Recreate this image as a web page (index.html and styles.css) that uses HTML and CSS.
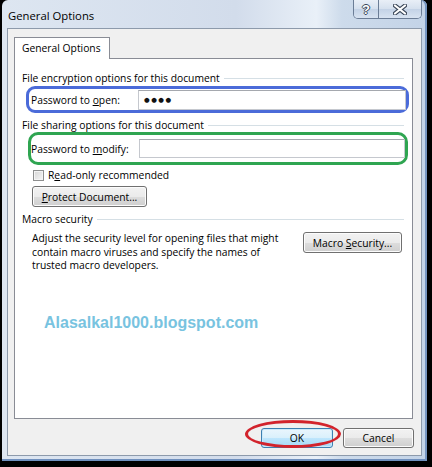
FILE: index.html
```html
<!DOCTYPE html>
<html lang="en">
<head>
    <meta charset="UTF-8">
    <meta name="viewport" content="width=device-width, initial-scale=1.0">
    <title>General Options</title>

    <link rel="stylesheet" href="styles.css">

</head>
<body>

<div class="screen">
    <div class="window">

        <div class="titlebar">
            <span class="title">General Options</span>
            <div class="caption-buttons">
                <span class="cap-btn help">?</span>
                <span class="cap-btn close">
                    <svg width="14" height="11" viewBox="0 0 14 11">
                        <path d="M2 1.5 L12 9.5 M12 1.5 L2 9.5" stroke="#3a4658" stroke-width="4.2" stroke-linecap="round"/>
                        <path d="M2 1.5 L12 9.5 M12 1.5 L2 9.5" stroke="#ffffff" stroke-width="2.2" stroke-linecap="round"/>
                    </svg>
                </span>
            </div>
        </div>

        <div class="client">
            <div class="tabs">
                <span class="tab">General Options</span>
            </div>

            <div class="panel">
                <div class="group-title">File encryption options for this document</div>

                <div class="mark mark-blue">
                    <label class="field-label">Password to <u>o</u>pen:</label>
                    <span class="textbox dots">&#9679;&#9679;&#9679;&#9679;</span>
                </div>

                <div class="group-title second">File sharing options for this document</div>

                <div class="mark mark-green">
                    <label class="field-label">Password to <u>m</u>odify:</label>
                    <span class="textbox"></span>
                </div>

                <label class="check-row">
                    <span class="checkbox"></span>
                    <span>R<u>e</u>ad-only recommended</span>
                </label>

                <button class="btn btn-protect"><u>P</u>rotect Document...</button>

                <div class="group-title third">Macro security</div>

                <div class="macro-row">
                    <p class="macro-text">
                        Adjust the security level for opening files that might<br>
                        contain macro viruses and specify the names of<br>
                        trusted macro developers.
                    </p>
                    <button class="btn btn-macro">Macro <u>S</u>ecurity...</button>
                </div>

                <div class="watermark">Alasalkal1000.blogspot.com</div>
            </div>

            <div class="footer">
                <span class="ok-wrap">
                    <button class="btn btn-default">OK</button>
                    <span class="ring"></span>
                </span>
                <button class="btn btn-cancel">Cancel</button>
            </div>
        </div>

    </div>
</div>

</body>
</html>
```

FILE: styles.css
```css
        * {
            box-sizing: border-box;
        }

        body {
            margin: 0;
            background-color: #000;
            font-family: "Open Sans", "Noto Sans", sans-serif;
            font-size: 10.3px;
            color: #000;
        }

        .screen {
            width: 432px;
            height: 467px;
            padding: 0 5px 6px 2px;
            background-color: #000;
        }

        .window {
            height: 100%;
            display: flex;
            flex-direction: column;
            padding: 0 5px 5px 5px;
            border-radius: 6px 6px 0 0;
            background: linear-gradient(to right, #dde6f1 0%, #d2dceb 55%, #e9f0f8 74%, #cddbeb 80%, #c3d3e7 100%);
            box-shadow: inset -2px 0 0 #7696c2, inset 0 -2px 0 #6f8fbd;
        }

        /* title bar */
        .titlebar {
            height: 28px;
            display: flex;
            justify-content: space-between;
            align-items: flex-start;
        }

        .title {
            margin: 9px 0 0 1px;
            font-size: 11.3px;
            line-height: 14px;
        }

        .caption-buttons {
            display: flex;
            height: 19px;
            border: 1px solid #6b7d96;
            border-top: none;
            border-radius: 0 0 5px 5px;
            overflow: hidden;
        }

        .cap-btn {
            display: flex;
            align-items: center;
            justify-content: center;
            background: linear-gradient(#e9eff7, #d5e0ee 50%, #c3d2e6 51%, #d8e3f1);
        }

        .help {
            width: 25px;
            border-right: 1px solid #6b7d96;
            color: #fff;
            font-family: "Liberation Sans", sans-serif;
            font-weight: bold;
            font-size: 13px;
            text-shadow: 1px 0 #3a4658, -1px 0 #3a4658, 0 1px #3a4658, 0 -1px #3a4658;
        }

        .close {
            width: 42px;
        }

        /* client area */
        .client {
            flex: 1;
            display: flex;
            flex-direction: column;
            padding: 8px 8px 7px 6px;
            background-color: #f0f0f0;
            border: 1px solid #8d9aab;
        }

        .tabs {
            display: flex;
            position: relative;
            z-index: 1;
            margin-bottom: -1px;
        }

        .tab {
            width: 96px;
            height: 22px;
            padding: 3px 0 0 7px;
            line-height: 14px;
            background-color: #fff;
            border: 1px solid #898c95;
            border-bottom: none;
        }

        .panel {
            flex: 1;
            padding: 12px 3px 0 7px;
            background-color: #fff;
            border: 1px solid #898c95;
        }

        .group-title {
            display: flex;
            align-items: center;
            gap: 4px;
            margin-right: 5px;
            line-height: 14px;
            white-space: nowrap;
        }

        .group-title::after {
            content: "";
            flex: 1;
            height: 1px;
            background-color: #d5dfe5;
        }

        .group-title.second {
            margin-top: 6px;
            line-height: 13px;
        }

        .group-title.third {
            margin-top: 5px;
        }

        /* the hand drawn marks round the password rows */
        .mark {
            display: flex;
            align-items: center;
            border: 3px solid;
            border-radius: 9px;
        }

        .mark-blue {
            height: 27px;
            margin: 1px 0 0 4px;
            padding: 1px 0 0 2px;
            border-color: #4b6bd9;
        }

        .mark-green {
            height: 33px;
            margin: 0 1px 0 6px;
            padding: 0;
            border-color: #2fa551;
            border-radius: 10px;
        }

        .mark-blue .field-label {
            width: 107px;
        }

        .mark-green .field-label {
            width: 108px;
        }

        .textbox {
            flex: 1;
            display: flex;
            align-items: center;
            padding-left: 5px;
            background-color: #fff;
            border: 1px solid #c5c8ce;
            border-top-color: #a5a8ae;
        }

        .mark-blue .textbox {
            height: 20px;
        }

        .mark-green .textbox {
            height: 19px;
        }

        .dots {
            font-family: "DejaVu Sans", sans-serif;
            font-size: 6.5px;
            letter-spacing: 1.5px;
            color: #111;
        }

        .check-row {
            display: flex;
            align-items: center;
            gap: 4px;
            height: 11px;
            margin: 5px 0 0 11px;
            line-height: 11px;
        }

        .checkbox {
            width: 11px;
            height: 11px;
            border: 1px solid #8e8f8f;
            background: linear-gradient(135deg, #d6d6d6, #f6f6f6);
            box-shadow: inset 0 0 0 1px #f4f4f4;
        }

        /* buttons */
        .btn {
            display: block;
            height: 21px;
            padding: 0;
            font-family: inherit;
            font-size: 10.3px;
            color: #000;
            border: 1px solid #707070;
            border-radius: 3px;
            background: linear-gradient(#f2f2f2, #ebebeb 50%, #dddddd 51%, #cfcfcf);
            box-shadow: inset 0 0 0 1px #fcfcfc;
        }

        .btn-protect {
            width: 115px;
            margin: 5px 0 0 10px;
        }

        .macro-row {
            display: flex;
            justify-content: space-between;
            align-items: flex-start;
            margin: 6px 7px 0 10px;
        }

        .macro-text {
            margin: 0;
            line-height: 13.5px;
        }

        .btn-macro {
            width: 99px;
        }

        .watermark {
            margin: 41px 0 0 22px;
            font-family: "Liberation Sans", Arial, sans-serif;
            font-weight: bold;
            font-size: 16px;
            line-height: 18px;
            color: #78c3e0;
        }

        /* bottom buttons */
        .footer {
            display: flex;
            justify-content: flex-end;
            gap: 10px;
            margin: 9px -1px 0 0;
        }

        .footer .btn {
            height: 20px;
        }

        .ok-wrap {
            position: relative;
        }

        .btn-default {
            width: 72px;
            border-color: #3c7fb1;
            background: linear-gradient(#eaf6fd, #d9f0fc 50%, #bee6fd 51%, #a7d9f5);
            box-shadow: inset 0 0 0 1px #c9e9fb;
        }

        .btn-cancel {
            width: 71px;
        }

        .ring {
            position: absolute;
            left: -16px;
            top: -8px;
            width: 96px;
            height: 28px;
            border: 3px solid #d2232c;
            border-radius: 50%;
            pointer-events: none;
        }
```
